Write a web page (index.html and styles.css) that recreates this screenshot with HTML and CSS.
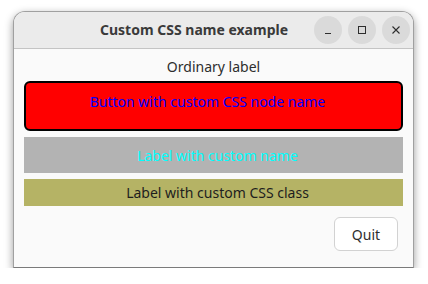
FILE: index.html
```html
<!DOCTYPE html>
<html>
<head>
<meta charset="utf-8">
<link rel="stylesheet" href="styles.css">
</head>
<body>
<div class="desk">
  <div class="window">
    <div class="header">
      <div class="title">Custom CSS name example</div>
      <div class="controls">
        <span class="ctl"><svg width="10" height="10" viewBox="0 0 10 10"><path d="M2 8.5h6" stroke="#2e2e2e" stroke-width="1"/></svg></span>
        <span class="ctl"><svg width="10" height="10" viewBox="0 0 10 10"><rect x="1.5" y="1.5" width="7" height="7" fill="none" stroke="#2e2e2e" stroke-width="1"/></svg></span>
        <span class="ctl"><svg width="10" height="10" viewBox="0 0 10 10"><path d="M1.5 1.5l7 7M8.5 1.5l-7 7" stroke="#2e2e2e" stroke-width="1.1"/></svg></span>
      </div>
    </div>
    <div class="content">
      <div class="ordinary">Ordinary label</div>
      <div class="custom-button">Button with custom CSS node name</div>
      <div class="custom-name">Label with custom name</div>
      <div class="custom-class">Label with custom CSS class</div>
      <div class="actions"><div class="quit">Quit</div></div>
    </div>
  </div>
</div>
</body>
</html>
```
FILE: styles.css
```css
html, body {
  margin: 0;
  padding: 0;
  background: #ffffff;
  font-family: "Noto Sans", "Open Sans", sans-serif;
}
.desk {
  padding: 11px 0 0 13px;
}
.window {
  width: 399px;
  height: 255px;
  border: 1px solid #a0a0a0;
  border-bottom-color: #7a7a7a;
  border-radius: 12px 12px 0 0;
  background: #fafafa;
  box-shadow: 0 3px 8px rgba(0,0,0,0.4);
  display: flex;
  flex-direction: column;
  overflow: hidden;
}
.header {
  height: 36px;
  background: #ebebeb;
  border-bottom: 1px solid #c4c4c4;
  display: flex;
  align-items: center;
  position: relative;
}
.title {
  position: absolute;
  left: 86px;
  top: 0;
  width: 188px;
  height: 36px;
  line-height: 36px;
  text-align: center;
  font-weight: bold;
  font-size: 14px;
  color: #3a3a3a;
  white-space: nowrap;
}
.controls {
  margin-left: auto;
  margin-right: 3px;
  display: flex;
  gap: 6px;
}
.ctl {
  width: 28px;
  height: 28px;
  border-radius: 50%;
  background: #dadada;
  display: flex;
  align-items: center;
  justify-content: center;
}
.content {
  flex: 1;
  padding: 6px 10px 0 10px;
  display: flex;
  flex-direction: column;
}
.ordinary {
  height: 24px;
  line-height: 24px;
  text-align: center;
  font-size: 14px;
  color: #2e2e2e;
  margin-bottom: 2px;
}
.custom-button {
  border: 2px solid #000;
  border-radius: 6px;
  background: #ff0000;
  color: #0000ff;
  font-size: 14px;
  display: flex;
  align-items: center;
  justify-content: center;
  padding-right: 12px;
  padding-bottom: 10px;
  box-sizing: border-box;
  height: 50px;
}
.custom-name {
  margin-top: 6px;
  height: 36px;
  background: #b3b3b3;
  color: #00ffff;
  font-size: 14px;
  display: flex;
  align-items: center;
  justify-content: center;
  padding-left: 8px;
}
.custom-class {
  margin-top: 6px;
  height: 27px;
  background: #b5b365;
  color: #1e1e1e;
  font-size: 14px;
  display: flex;
  align-items: center;
  justify-content: center;
  padding-left: 8px;
}
.actions {
  display: flex;
  justify-content: flex-end;
  margin-top: 11px;
  padding-right: 5px;
}
.quit {
  width: 62px;
  height: 32px;
  border: 1px solid #d2d2d2;
  border-radius: 6px;
  background: #ffffff;
  color: #2e2e2e;
  font-size: 14px;
  display: flex;
  align-items: center;
  justify-content: center;
}
```
